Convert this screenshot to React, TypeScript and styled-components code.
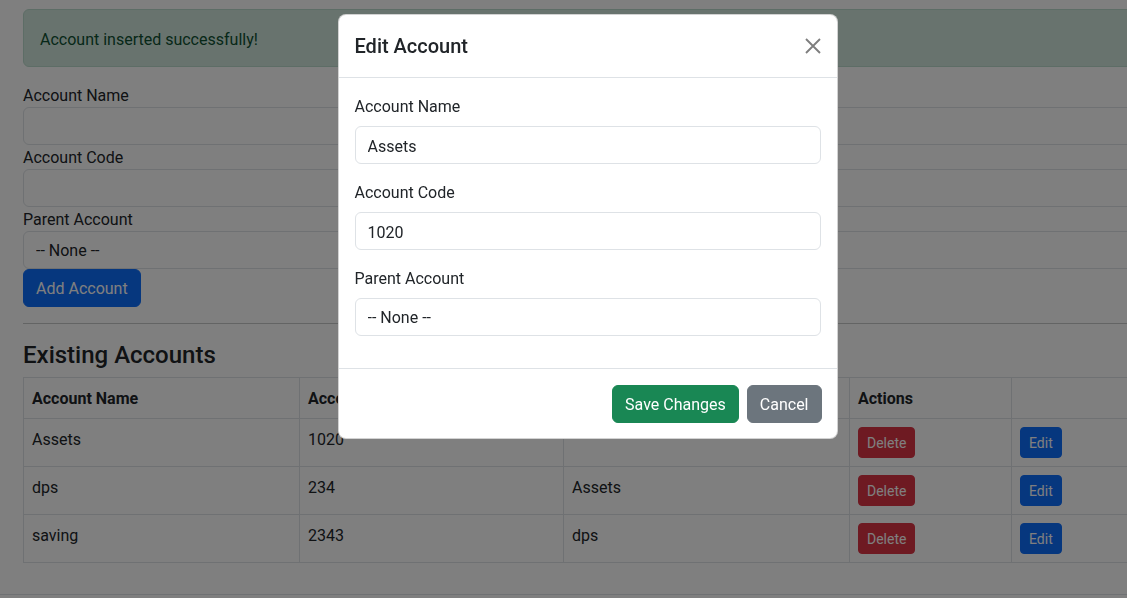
import React, { useState } from "react";
import styled, { createGlobalStyle } from "styled-components";

const GlobalStyle = createGlobalStyle`
    html, body {
        margin: 0;
        overflow: hidden;
        background: #fff;
    }
    body {
        font-family: Roboto, "Liberation Sans", sans-serif;
        font-size: 16px;
        line-height: 1.5;
        color: #212529;
    }
    * {
        box-sizing: border-box;
    }
`;

interface Account {
    name: string,
    code: string,
    parent: string
};

const accounts: Account[] = [
    { name: 'Assets', code: '1020', parent: '' },
    { name: 'dps', code: '234', parent: 'Assets' },
    { name: 'saving', code: '2343', parent: 'dps' },
];

const columnWidths = [276, 264, 286, 162];

const App: React.FC = () => {
    const [modalView, setModalView] = useState(true);
    const [name, setName] = useState('Assets');
    const [code, setCode] = useState('1020');

    return (
        <>
            <GlobalStyle />
            <Page>
                <Alert>Account inserted successfully!</Alert>

                <FormLabel>Account Name</FormLabel>
                <PageInput type="text" />
                <FormLabel>Account Code</FormLabel>
                <PageInput type="text" />
                <FormLabel>Parent Account</FormLabel>
                <PageSelect defaultValue="">
                    <option value="">-- None --</option>
                </PageSelect>
                <Button $variant="primary">Add Account</Button>

                <Rule />

                <SectionTitle>Existing Accounts</SectionTitle>
                <Table>
                    <colgroup>
                        {columnWidths.map((w, i) => <col key={i} style={{ width: w }} />)}
                        <col />
                    </colgroup>
                    <thead>
                        <tr>
                            <Th>Account Name</Th>
                            <Th>Account Code</Th>
                            <Th>Parent Account</Th>
                            <Th>Actions</Th>
                            <Th></Th>
                        </tr>
                    </thead>
                    <tbody>
                        {accounts.map(a => (
                            <tr key={a.name}>
                                <Td>{a.name}</Td>
                                <Td>{a.code}</Td>
                                <Td>{a.parent}</Td>
                                <Td><SmallButton $variant="danger">Delete</SmallButton></Td>
                                <Td><SmallButton $variant="primary" onClick={() => setModalView(true)}>Edit</SmallButton></Td>
                            </tr>
                        ))}
                    </tbody>
                </Table>
            </Page>
            <Footer />

            {modalView &&
                <Backdrop>
                    <Dialog>
                        <ModalHeader>
                            <ModalTitle>Edit Account</ModalTitle>
                            <CloseButton onClick={() => setModalView(false)} aria-label="Close">
                                <svg width="16" height="16" viewBox="0 0 16 16">
                                    <path d="M1 1L15 15M15 1L1 15" stroke="#000" strokeWidth="1.9" fill="none" />
                                </svg>
                            </CloseButton>
                        </ModalHeader>
                        <ModalBody>
                            <Field>
                                <ModalLabel>Account Name</ModalLabel>
                                <PageInput type="text" value={name} onChange={e => setName(e.target.value)} />
                            </Field>
                            <Field>
                                <ModalLabel>Account Code</ModalLabel>
                                <PageInput type="text" value={code} onChange={e => setCode(e.target.value)} />
                            </Field>
                            <Field>
                                <ModalLabel>Parent Account</ModalLabel>
                                <PageSelect defaultValue="">
                                    <option value="">-- None --</option>
                                    <option value="dps">dps</option>
                                </PageSelect>
                            </Field>
                        </ModalBody>
                        <ModalFooter>
                            <Button $variant="success">Save Changes</Button>
                            <Button $variant="secondary" onClick={() => setModalView(false)}>Cancel</Button>
                        </ModalFooter>
                    </Dialog>
                </Backdrop>
            }
        </>
    )
}

const colors: Record<string, string> = {
    primary: '#0d6efd',
    danger: '#dc3545',
    success: '#198754',
    secondary: '#6c757d',
};

// Roboto sits ~1-2px higher than the original UI font, so text boxes get a little extra top padding

const Page = styled.div`
    width: 1175px;
    padding: 9px 23px 0;
`;

const Alert = styled.div`
    padding: 18px 16px 14px;
    margin-bottom: 16px;
    color: #0f5132;
    background: #d1e7dd;
    border: 1px solid #badbcc;
    border-radius: 6px;
    line-height: 24px;
`;

const FormLabel = styled.label`
    display: block;
    padding-top: 2px;
    line-height: 22px;
`;

const PageInput = styled.input`
    display: block;
    width: 100%;
    height: 38px;
    padding: 7px 12px 5px;
    font: inherit;
    line-height: 24px;
    color: #212529;
    background: #fff;
    border: 1px solid #dee2e6;
    border-radius: 6px;
    outline: none;
`;

const PageSelect = styled.select`
    display: block;
    width: 100%;
    height: 38px;
    padding: 7px 12px 5px;
    font: inherit;
    line-height: 24px;
    color: #212529;
    background: #fff;
    border: 1px solid #dee2e6;
    border-radius: 6px;
    appearance: none;
    outline: none;
`;

const Button = styled.button<{ $variant: string }>`
    display: inline-block;
    height: 38px;
    padding: 7px 12px 5px;
    font: inherit;
    line-height: 24px;
    color: #fff;
    background: ${p => colors[p.$variant]};
    border: 1px solid ${p => colors[p.$variant]};
    border-radius: 6px;
    cursor: pointer;
`;

const SmallButton = styled(Button)`
    height: 31px;
    padding: 5px 8px 3px;
    font-size: 14px;
    line-height: 21px;
    border-radius: 4px;
`;

const Rule = styled.hr`
    margin: 16px 0;
    border: 0;
    border-top: 1px solid rgba(33, 37, 41, 0.25);
`;

const SectionTitle = styled.h4`
    margin: 0 0 8px;
    padding-top: 1px;
    font-size: 24px;
    font-weight: 500;
    line-height: 28px;
`;

const Table = styled.table`
    width: 100%;
    border-collapse: collapse;
    table-layout: fixed;
    margin-bottom: 16px;
`;

const Th = styled.th`
    padding: 9px 8px 7px;
    text-align: left;
    font-weight: 700;
    line-height: 24px;
    border: 1px solid #dee2e6;
`;

const Td = styled.td`
    height: 48px;
    padding: 9px 8px 7px;
    line-height: 24px;
    vertical-align: top;
    border: 1px solid #dee2e6;

    & > button {
        margin-top: -1px;
    }
`;

// margins collapse with the table's bottom margin, so this one carries the whole gap
const Footer = styled.div`
    margin-top: 31px;
    border-top: 1px solid #dee2e6;
    height: 20px;
`;

const Backdrop = styled.div`
    position: fixed;
    top: 0;
    left: 0;
    width: 1175px;
    height: 100%;
    background: rgba(0, 0, 0, 0.5);
    display: flex;
    justify-content: center;
    align-items: flex-start;
`;

const Dialog = styled.div`
    width: 500px;
    margin-top: 14px;
    background: #fff;
    border: 1px solid rgba(0, 0, 0, 0.175);
    border-radius: 8px;
    display: flex;
    flex-direction: column;
`;

const ModalHeader = styled.div`
    display: flex;
    align-items: center;
    padding: 16px;
    border-bottom: 1px solid #dee2e6;
`;

const ModalTitle = styled.h5`
    margin: 0;
    padding-top: 1px;
    font-size: 20px;
    font-weight: 500;
    line-height: 29px;
`;

const CloseButton = styled.button`
    margin: -8px -8px -8px auto;
    padding: 8px;
    width: 32px;
    height: 32px;
    display: flex;
    align-items: center;
    justify-content: center;
    background: transparent;
    border: 0;
    opacity: 0.5;
    cursor: pointer;
`;

const ModalBody = styled.div`
    padding: 16px 16px 32px;
    display: flex;
    flex-direction: column;
    gap: 16px;
`;

const Field = styled.div`
    display: flex;
    flex-direction: column;
    gap: 8px;
`;

const ModalLabel = styled.label`
    padding-top: 2px;
    line-height: 22px;
`;

const ModalFooter = styled.div`
    display: flex;
    justify-content: flex-end;
    gap: 8px;
    padding: 16px 15px 15px;
    border-top: 1px solid #dee2e6;
`;

export default App;
